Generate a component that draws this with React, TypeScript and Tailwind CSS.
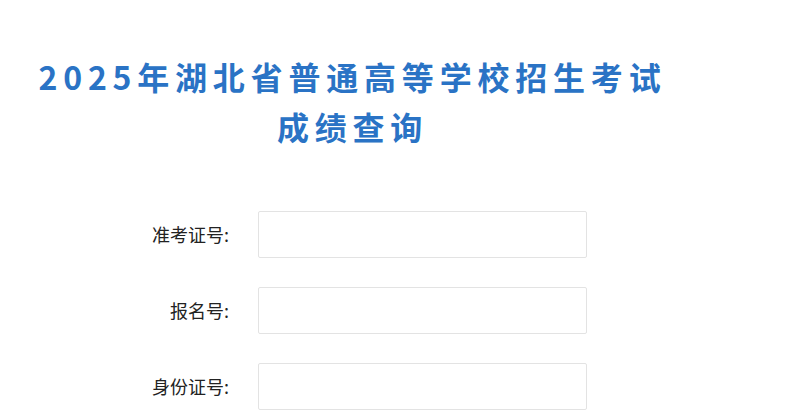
export default function App() {
  const fields = ["准考证号:", "报名号:", "身份证号:"];
  return (
    <div
      className="min-h-[417px] w-[786px] bg-white"
      style={{ fontFamily: '"Noto Sans CJK SC", "Noto Sans", sans-serif' }}
    >
      <div className="w-[705px] pt-[51px] text-center text-[32px] font-bold leading-[50px] tracking-[5.8px] text-[#2a73c5]">
        <div>2025年湖北省普通高等学校招生考试</div>
        <div>成绩查询</div>
      </div>
      <div className="mt-[60px] flex flex-col gap-[29px]">
        {fields.map((f) => (
          <div key={f} className="flex items-center">
            <label className="w-[230px] pr-[1px] text-right text-[18px] text-[#222]">{f}</label>
            <input
              type="text"
              className="ml-[28px] h-[47px] w-[329px] rounded-[2px] border border-[#e3e3e3] bg-white outline-none"
            />
          </div>
        ))}
      </div>
    </div>
  );
}
